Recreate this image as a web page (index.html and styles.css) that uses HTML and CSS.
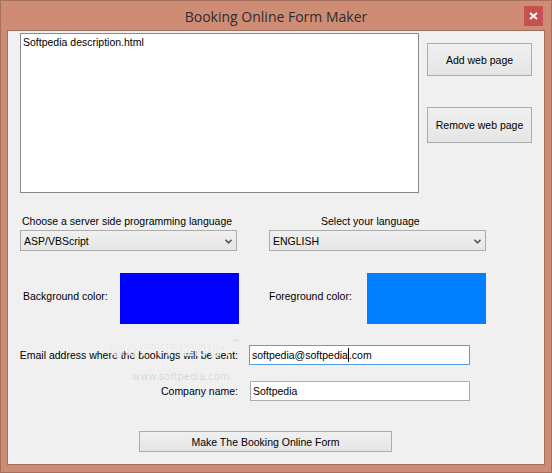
FILE: index.html
```html
<!DOCTYPE html>
<html>
<head>
<meta charset="utf-8">
<title>Booking Online Form Maker</title>
<link rel="stylesheet" href="styles.css">
</head>
<body>
<div class="window">
  <div class="titlebar">
    <div class="title">Booking Online Form Maker</div>
    <div class="close">
      <svg width="9" height="8" viewBox="0 0 9 8"><path d="M1 1 L8 7 M8 1 L1 7" stroke="#fff" stroke-width="2"/></svg>
    </div>
  </div>
  <div class="client">
    <div class="row-top">
      <div class="listbox"><div class="item">Softpedia description.html</div></div>
      <div class="side-buttons">
        <div class="btn btn-add">Add web page</div>
        <div class="btn btn-remove">Remove web page</div>
      </div>
    </div>

    <div class="row-selects">
      <div class="col col-left">
        <div class="lbl lbl-server">Choose a server side programming language</div>
        <div class="select"><span>ASP/VBScript</span>
          <svg class="arrow" width="7" height="5" viewBox="0 0 7 5"><path d="M0.5 0.8 L3.5 3.8 L6.5 0.8" stroke="#5a5a5a" stroke-width="1.6" fill="none"/></svg>
        </div>
      </div>
      <div class="col col-right">
        <div class="lbl lbl-lang">Select your language</div>
        <div class="select"><span>ENGLISH</span>
          <svg class="arrow" width="7" height="5" viewBox="0 0 7 5"><path d="M0.5 0.8 L3.5 3.8 L6.5 0.8" stroke="#5a5a5a" stroke-width="1.6" fill="none"/></svg>
        </div>
      </div>
    </div>

    <div class="row-colors">
      <div class="color-group left-group">
        <div class="clbl">Background color:</div>
        <div class="swatch swatch-bg"></div>
      </div>
      <div class="color-group right-group">
        <div class="clbl">Foreground color:</div>
        <div class="swatch swatch-fg"></div>
      </div>
    </div>

    <div class="field field-email">
      <div class="flbl">Email address where the bookings will be sent:</div>
      <div class="input input-focus">softpedia@softpedia<span class="caret"></span>.com</div>
    </div>
    <div class="field field-company">
      <div class="flbl">Company name:</div>
      <div class="input input-company">Softpedia</div>
    </div>

    <div class="make-row">
      <div class="btn btn-make">Make The Booking Online Form</div>
    </div>

    <div class="watermark">SOFTPEDIA<span class="tm">™</span></div>
    <div class="watermark-url">www.softpedia.com</div>
  </div>
</div>
</body>
</html>
```

FILE: styles.css
```css
* { box-sizing: border-box; }
html, body { margin: 0; padding: 0; background: #cf8b73; }
body { font-family: "Liberation Sans", Arial, sans-serif; font-size: 10.5px; color: #000; }

.window {
  width: 552px;
  height: 473px;
  background: #cf8c75;
  border: 1px solid #a5705d;
  display: flex;
  flex-direction: column;
  overflow: hidden;
}

.titlebar {
  height: 29px;
  display: flex;
  align-items: center;
  justify-content: center;
  position: relative;
}
.title {
  font-family: "Open Sans", "Noto Sans", sans-serif;
  font-size: 14px;
  color: #2d2d2d;
  margin-top: 1px;
}
.close {
  position: absolute;
  left: 523px;
  top: 5px;
  width: 19px;
  height: 20px;
  background: #c75050;
  display: flex;
  align-items: center;
  justify-content: center;
}

.client {
  position: relative;
  margin: 0 6px 0 6px;
  height: 435px;
  background: #f0f0f0;
  border: 1px solid #a07060;
}

.row-top {
  display: flex;
  padding: 2px 0 0 12px;
}
.listbox {
  width: 399px;
  height: 160px;
  background: #fff;
  border: 1px solid #828790;
}
.item { padding: 2px 0 0 2px; line-height: 13px; }

.side-buttons {
  margin-left: 8px;
  display: flex;
  flex-direction: column;
}
.btn {
  width: 105px;
  border: 1px solid #acacac;
  background: linear-gradient(#f0f0f0, #e5e5e5);
  display: flex;
  align-items: center;
  justify-content: center;
  white-space: nowrap;
}
.btn-add { margin-top: 10px; height: 33px; }
.btn-remove { margin-top: 31px; height: 36px; }

.row-selects {
  display: flex;
  margin-top: 22px;
  padding-left: 12px;
}
.col { width: 217px; }
.col-right { margin-left: 32px; }
.lbl { line-height: 13px; height: 13px; white-space: nowrap; }
.lbl-server { padding-left: 2px; }
.lbl-lang { padding-left: 52px; }
.select {
  margin-top: 2px;
  width: 217px;
  height: 21px;
  border: 1px solid #acacac;
  background: linear-gradient(#f0f0f0, #e6e6e6);
  display: flex;
  align-items: center;
  justify-content: space-between;
  padding: 0 4px 0 3px;
}
.arrow { margin-top: 1px; }

.row-colors {
  display: flex;
  margin-top: 22px;
  padding-left: 15px;
}
.color-group { display: flex; align-items: center; }
.left-group { width: 246px; }
.clbl { width: 97px; line-height: 13px; margin-top: -5px; white-space: nowrap; }
.right-group .clbl { width: 98px; }
.swatch { width: 119px; height: 51px; }
.swatch-bg { background: #0000ff; }
.swatch-fg { background: #0080ff; }

.field {
  display: flex;
  align-items: center;
}
.field-email { margin-top: 21px; }
.field-company { margin-top: 16px; }
.flbl {
  width: 230px;
  text-align: right;
  white-space: nowrap;
  line-height: 13px;
}
.input {
  height: 20px;
  border: 1px solid #abadb3;
  background: #fff;
  display: flex;
  align-items: center;
  padding: 0 2px;
  font-size: 10.5px;
}
.input-focus { margin-left: 11px; width: 221px; border-color: #569de5; }
.input-company { margin-left: 12px; width: 220px; }
.caret {
  display: inline-block;
  width: 1px;
  height: 14px;
  background: #000;
}

.make-row { padding-left: 131px; margin-top: 30px; }
.btn-make { width: 253px; height: 21px; }

.watermark {
  position: absolute;
  left: 102px;
  top: 306px;
  font-family: "Liberation Sans", Arial, sans-serif;
  font-weight: bold;
  font-size: 21px;
  line-height: 24px;
  color: rgba(252,252,252,0.75);
  text-shadow: 0 0 1px rgba(0,0,0,0.12);
  pointer-events: none;
}
.watermark .tm {
  font-size: 7px;
  font-weight: normal;
  vertical-align: top;
  line-height: 10px;
  margin-left: 2px;
  color: rgba(0,0,0,0.15);
  text-shadow: none;
}
.watermark-url {
  position: absolute;
  left: 124px;
  top: 340px;
  font-family: "DejaVu Sans", sans-serif;
  font-size: 10px;
  color: rgba(0,0,0,0.12);
  pointer-events: none;
}
```
